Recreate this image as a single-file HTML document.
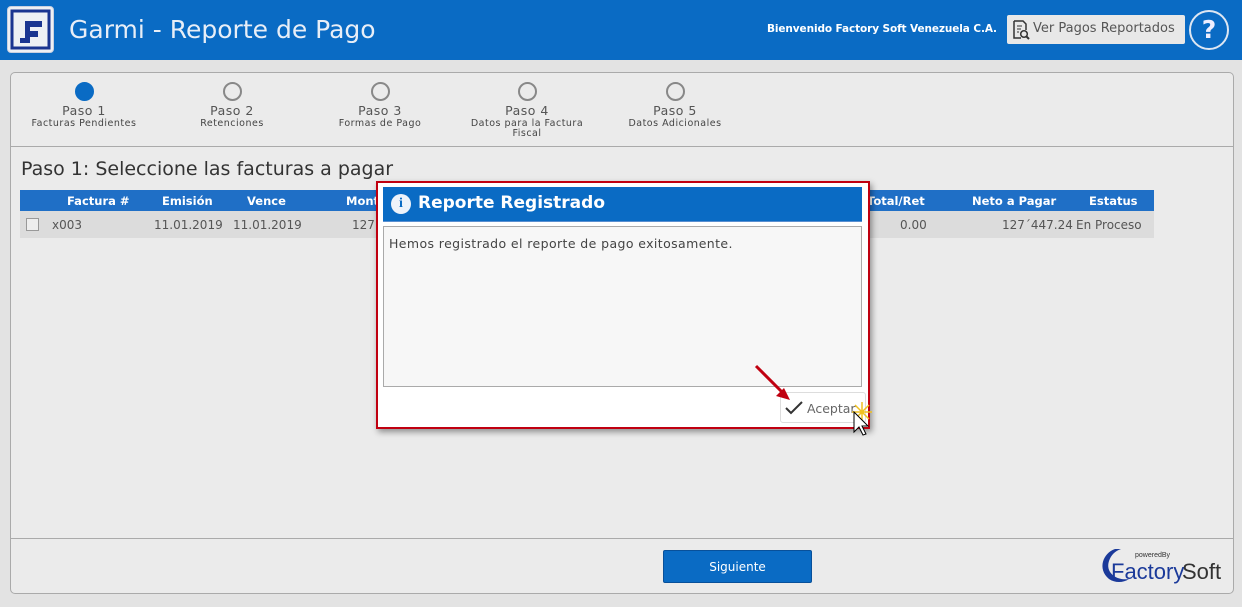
<!DOCTYPE html>
<html><head><style>
*{box-sizing:border-box;margin:0;padding:0}
body{width:1242px;height:607px;overflow:hidden;background:#e3e3e3;font-family:"DejaVu Sans","Liberation Sans",sans-serif;position:relative;color:#444}
.abs{position:absolute}
#hdr{left:0;top:0;width:1242px;height:60px;background:#0a6bc4}
#logo{left:7px;top:6px;width:47px;height:47px;background:#eef0f4;border-radius:4px;border:1px solid #c8d0e0}
#title{left:69px;top:15px;font-size:25px;color:#e8eef7;font-family:"DejaVu Sans",sans-serif}
#welcome{left:767px;top:23px;font-size:10.5px;font-weight:bold;color:#fff;letter-spacing:-.1px}
#ver{left:1007px;top:15px;width:178px;height:29px;background:#e8e8e8;border-radius:2px;font-size:13px;color:#555;padding:6px 0 0 26px}
#help{left:1189px;top:10px;width:40px;height:40px;border:2.5px solid #dde6f2;border-radius:50%;color:#eef;font-size:25px;font-weight:bold;text-align:center;line-height:35px}
#panel{left:10px;top:72px;width:1224px;height:522px;background:#ebebeb;border:1px solid #aaa;border-radius:5px}
.step{position:absolute;top:82px;width:140px;text-align:center}
.step .c{width:19px;height:19px;border:2px solid #888;border-radius:50%;margin:0 auto;background:#ebebeb}
.step .c.on{background:#0a6bc4;border-color:#0a6bc4}
.step .t{font-size:12.5px;color:#555;margin-top:2px;letter-spacing:.5px}
.step .s{font-size:9.5px;color:#444;letter-spacing:.5px;line-height:10px;margin-top:1px}
.line{height:1px;background:#aaa}
#h1{left:21px;top:158px;font-size:19px;color:#333}
#th{left:20px;top:190px;width:1134px;height:21px;background:#1f6fc6;color:#fff;font-size:11.5px;font-weight:bold}
#th span,#tr span{position:absolute;top:4px;white-space:nowrap}
#tr{left:20px;top:211px;width:1134px;height:27px;background:#dcdcdc;font-size:12px;color:#555}
#tr span{top:7px}
#dlg{left:376px;top:181px;width:494px;height:248px;background:#fff;border:2px solid #c00010;box-shadow:2px 3px 6px rgba(0,0,0,.4)}
#dt{left:383px;top:187px;width:479px;height:35px;background:#0a6bc4;border-bottom:1px solid #5a8fd0;color:#fff;font-size:17px;font-weight:bold;padding:6px 0 0 35px}
#ic{left:391px;top:194px;width:20px;height:20px;border-radius:50%;background:#eef3fa;color:#0a6bc4;font:bold 14px "Liberation Serif",serif;text-align:center;line-height:20px}
#dc{left:383px;top:226px;width:479px;height:161px;background:#f7f7f7;border:1px solid #aaa;font-size:12.5px;color:#444;padding:9px 0 0 5px;letter-spacing:.4px}
#ok{left:780px;top:392px;width:86px;height:31px;border:1px solid #ddd;border-radius:3px;background:#fff;font-size:12.5px;color:#666;padding:8px 0 0 26px}
#sig{left:663px;top:550px;width:149px;height:33px;background:#0a6bc4;border:1px solid #08509a;border-radius:2px;color:#fff;font-size:12px;text-align:center;line-height:33px}
</style></head><body>
<div id="hdr" class="abs"></div>
<div id="logo" class="abs"><svg width="45" height="45" viewBox="0 0 45 45"><rect x="4" y="4" width="37" height="37" fill="none" stroke="#1b3590" stroke-width="3"/><path d="M12 14h22v6H22v4h8v6H22v6H12v-5h5V14z" fill="#1b3590"/></svg></div>
<div id="title" class="abs">Garmi - Reporte de Pago</div>
<div id="welcome" class="abs">Bienvenido Factory Soft Venezuela C.A.</div>
<div id="ver" class="abs">Ver Pagos Reportados<svg class="abs" style="left:5px;top:5px" width="18" height="20" viewBox="0 0 18 20"><path d="M2 1h9l3 3v6M2 1v17h7" fill="none" stroke="#333" stroke-width="1.5"/><path d="M5 6h5M5 9h4M5 12h2" stroke="#333"/><circle cx="12" cy="14" r="3.3" fill="none" stroke="#333" stroke-width="1.5"/><path d="M14.5 16.5l2.5 2.5" stroke="#333" stroke-width="2"/></svg></div>
<div id="help" class="abs">?</div>
<div id="panel" class="abs">
 <div class="line abs" style="left:0;top:73px;width:1222px"></div>
 <div class="line abs" style="left:0;top:465px;width:1222px"></div>
</div>
<div class="step" style="left:14px"><div class="c on"></div><div class="t">Paso 1</div><div class="s">Facturas Pendientes</div></div>
<div class="step" style="left:162px"><div class="c"></div><div class="t">Paso 2</div><div class="s">Retenciones</div></div>
<div class="step" style="left:310px"><div class="c"></div><div class="t">Paso 3</div><div class="s">Formas de Pago</div></div>
<div class="step" style="left:457px"><div class="c"></div><div class="t">Paso 4</div><div class="s">Datos para la Factura<br>Fiscal</div></div>
<div class="step" style="left:605px"><div class="c"></div><div class="t">Paso 5</div><div class="s">Datos Adicionales</div></div>
<div id="h1" class="abs">Paso 1: Seleccione las facturas a pagar</div>
<div id="th" class="abs"><span style="left:47px">Factura #</span><span style="left:142px">Emisión</span><span style="left:227px">Vence</span><span style="left:326px">Monto</span><span style="left:847px">Total/Ret</span><span style="left:952px">Neto a Pagar</span><span style="left:1069px">Estatus</span></div>
<div id="tr" class="abs"><span style="left:6px;top:7px;width:13px;height:13px;border:1px solid #999;background:#eee"></span><span style="left:32px">x003</span><span style="left:134px">11.01.2019</span><span style="left:213px">11.01.2019</span><span style="left:332px">127</span><span style="left:880px">0.00</span><span style="left:982px">127´447.24</span><span style="left:1056px">En Proceso</span></div>
<div id="dlg" class="abs"></div>
<div id="dt" class="abs">Reporte Registrado</div>
<div id="ic" class="abs">i</div>
<div id="dc" class="abs">Hemos registrado el reporte de pago exitosamente.</div>
<div id="ok" class="abs">Aceptar<svg class="abs" style="left:4px;top:8px" width="18" height="14"><path d="M1 7l5 5L17 1" fill="none" stroke="#333" stroke-width="2"/></svg></div>
<svg class="abs" style="left:750px;top:360px" width="130" height="90"><path d="M6 6l28 28" stroke="#c00010" stroke-width="3"/><path d="M40 40l-14-4 8-8z" fill="#c00010"/><path d="M105 45l14 14M119 45l-14 14M112 42v20M102 52h20" stroke="#f0c020" stroke-width="1.5"/><path d="M104 52v20l5-5 4 8 3-1-4-8h6z" fill="#fff" stroke="#000"/></svg>
<div id="sig" class="abs">Siguiente</div>
<svg class="abs" style="left:1097px;top:545px" width="128" height="40"><path d="M18 4C6 8 0 24 12 34c6 4 14 4 20 0C20 36 8 28 12 16 14 10 18 6 24 4z" fill="#1b3a9a"/><text x="38" y="12" font-size="7" fill="#333" font-family="Liberation Sans">poweredBy</text><text x="14" y="34" font-size="22" fill="#1b3a9a" font-family="Liberation Sans">Factory</text><text x="85" y="34" font-size="22" fill="#333" font-family="Liberation Sans">Soft</text></svg>
</body></html>
